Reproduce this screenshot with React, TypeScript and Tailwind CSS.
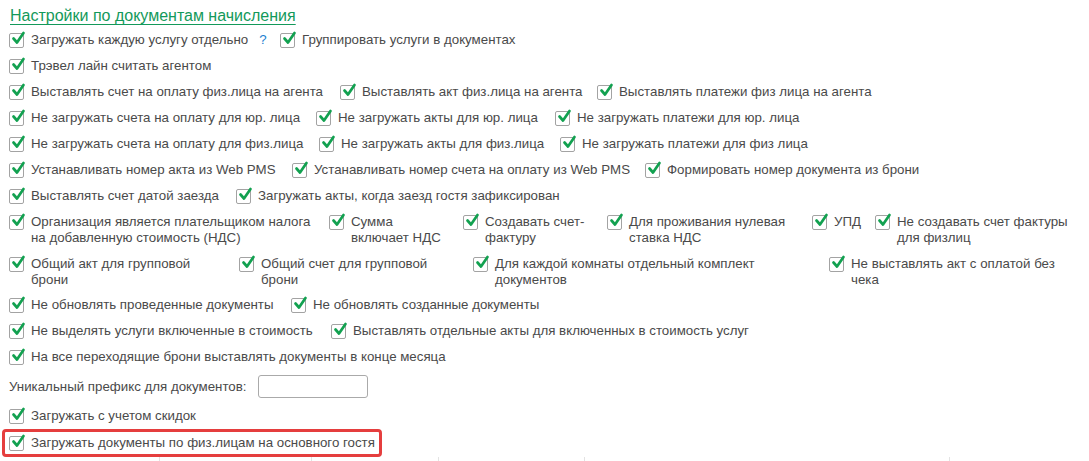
import React from 'react'

const Check = () => (
  <span className="relative inline-block w-[15px] h-[15px] shrink-0 border border-[#a3a3a3] rounded-[2px] bg-white mt-[1px]">
    <svg className="absolute left-[1px] top-[-3px]" width="15" height="15" viewBox="0 0 15 15">
      <path d="M2.5 7.5 L6 11.5 L12.5 2" fill="none" stroke="#12a150" strokeWidth="2.7" strokeLinecap="round" strokeLinejoin="round" />
    </svg>
  </span>
)

type ItemProps = { label: React.ReactNode; w?: string; extra?: React.ReactNode }

const Item = ({ label, w = '', extra }: ItemProps) => (
  <div className={`flex items-start gap-[7px] shrink-0 ${w}`}>
    <Check />
    <span className="leading-[16px]">{label}</span>
    {extra}
  </div>
)

export default function App() {
  return (
    <div className="w-[1089px] h-[461px] bg-white text-[13.3px] text-[#4a4a4a] relative overflow-hidden" style={{ fontFamily: '"Liberation Sans", Arial, sans-serif' }}>
      <div className="pl-[9px] pt-[6px] flex flex-col">
        <h2 className="text-[16px] leading-[20px] text-[#13995a] underline underline-offset-[3px] pl-[1px] mb-[6px]">
          Настройки по документам начисления
        </h2>

        <div className="flex flex-col gap-[10px]">
          <div className="flex">
            <Item
              w="w-[271px]"
              label="Загружать каждую услугу отдельно"
              extra={<span className="ml-[4px] text-[#1c7fd0] leading-[16px]">?</span>}
            />
            <Item label="Группировать услуги в документах" />
          </div>

          <div className="flex">
            <Item label="Трэвел лайн считать агентом" />
          </div>

          <div className="flex">
            <Item w="w-[331px]" label="Выставлять счет на оплату физ.лица на агента" />
            <Item w="w-[257px]" label="Выставлять акт физ.лица на агента" />
            <Item label="Выставлять платежи физ лица на агента" />
          </div>

          <div className="flex">
            <Item w="w-[307px]" label="Не загружать счета на оплату для юр. лица" />
            <Item w="w-[239px]" label="Не загружать акты для юр. лица" />
            <Item label="Не загружать платежи для юр. лица" />
          </div>

          <div className="flex">
            <Item w="w-[310px]" label="Не загружать счета на оплату для физ.лица" />
            <Item w="w-[241px]" label="Не загружать акты для физ.лица" />
            <Item label="Не загружать платежи для физ лица" />
          </div>

          <div className="flex">
            <Item w="w-[283px]" label="Устанавливать номер акта из Web PMS" />
            <Item w="w-[353px]" label="Устанавливать номер счета на оплату из Web PMS" />
            <Item label="Формировать номер документа из брони" />
          </div>

          <div className="flex">
            <Item w="w-[227px]" label="Выставлять счет датой заезда" />
            <Item label="Загружать акты, когда заезд гостя зафиксирован" />
          </div>

          <div className="flex">
            <Item w="w-[320px]" label={<>Организация является плательщиком налога<br />на добавленную стоимость (НДС)</>} />
            <Item w="w-[134px]" label={<>Сумма<br />включает НДС</>} />
            <Item w="w-[144px]" label={<>Создавать счет-<br />фактуру</>} />
            <Item w="w-[205px]" label={<>Для проживания нулевая<br />ставка НДС</>} />
            <Item w="w-[63px]" label="УПД" />
            <Item label={<>Не создавать счет фактуры<br />для физлиц</>} />
          </div>

          <div className="flex -mb-[1px]">
            <Item w="w-[230px]" label={<>Общий акт для групповой<br />брони</>} />
            <Item w="w-[234px]" label={<>Общий счет для групповой<br />брони</>} />
            <Item w="w-[356px]" label={<>Для каждой комнаты отдельный комплект<br />документов</>} />
            <Item label={<>Не выставлять акт с оплатой без<br />чека</>} />
          </div>

          <div className="flex">
            <Item w="w-[282px]" label="Не обновлять проведенные документы" />
            <Item label="Не обновлять созданные документы" />
          </div>

          <div className="flex">
            <Item w="w-[322px]" label="Не выделять услуги включенные в стоимость" />
            <Item label="Выставлять отдельные акты для включенных в стоимость услуг" />
          </div>

          <div className="flex">
            <Item label="На все переходящие брони выставлять документы в конце месяца" />
          </div>

          <div className="flex items-center gap-[11px]">
            <span className="leading-[16px]">Уникальный префикс для документов:</span>
            <input className="w-[110px] h-[23px] border border-[#aaaaaa] rounded-[3px] outline-none bg-white" />
          </div>

          <div className="flex">
            <Item label="Загружать с учетом скидок" />
          </div>

          <div className="flex -ml-[7px] mt-[1px]">
            <div className="border-[3px] border-[#e53e3e] rounded-[4px] px-[4px] py-[3px] -my-[6px]">
              <Item label="Загружать документы по физ.лицам на основного гостя" />
            </div>
          </div>
        </div>
      </div>

      <div className="absolute bottom-0 left-0 w-full h-[4px]">
        <span className="absolute left-[159px] top-0 w-px h-[4px] bg-[#e3e3e3]" />
        <span className="absolute left-[311px] top-0 w-px h-[4px] bg-[#e3e3e3]" />
        <span className="absolute left-[438px] top-0 w-px h-[4px] bg-[#e3e3e3]" />
        <span className="absolute left-[584px] top-0 w-px h-[4px] bg-[#e3e3e3]" />
        <span className="absolute left-[949px] top-0 w-px h-[4px] bg-[#e3e3e3]" />
      </div>
    </div>
  )
}
